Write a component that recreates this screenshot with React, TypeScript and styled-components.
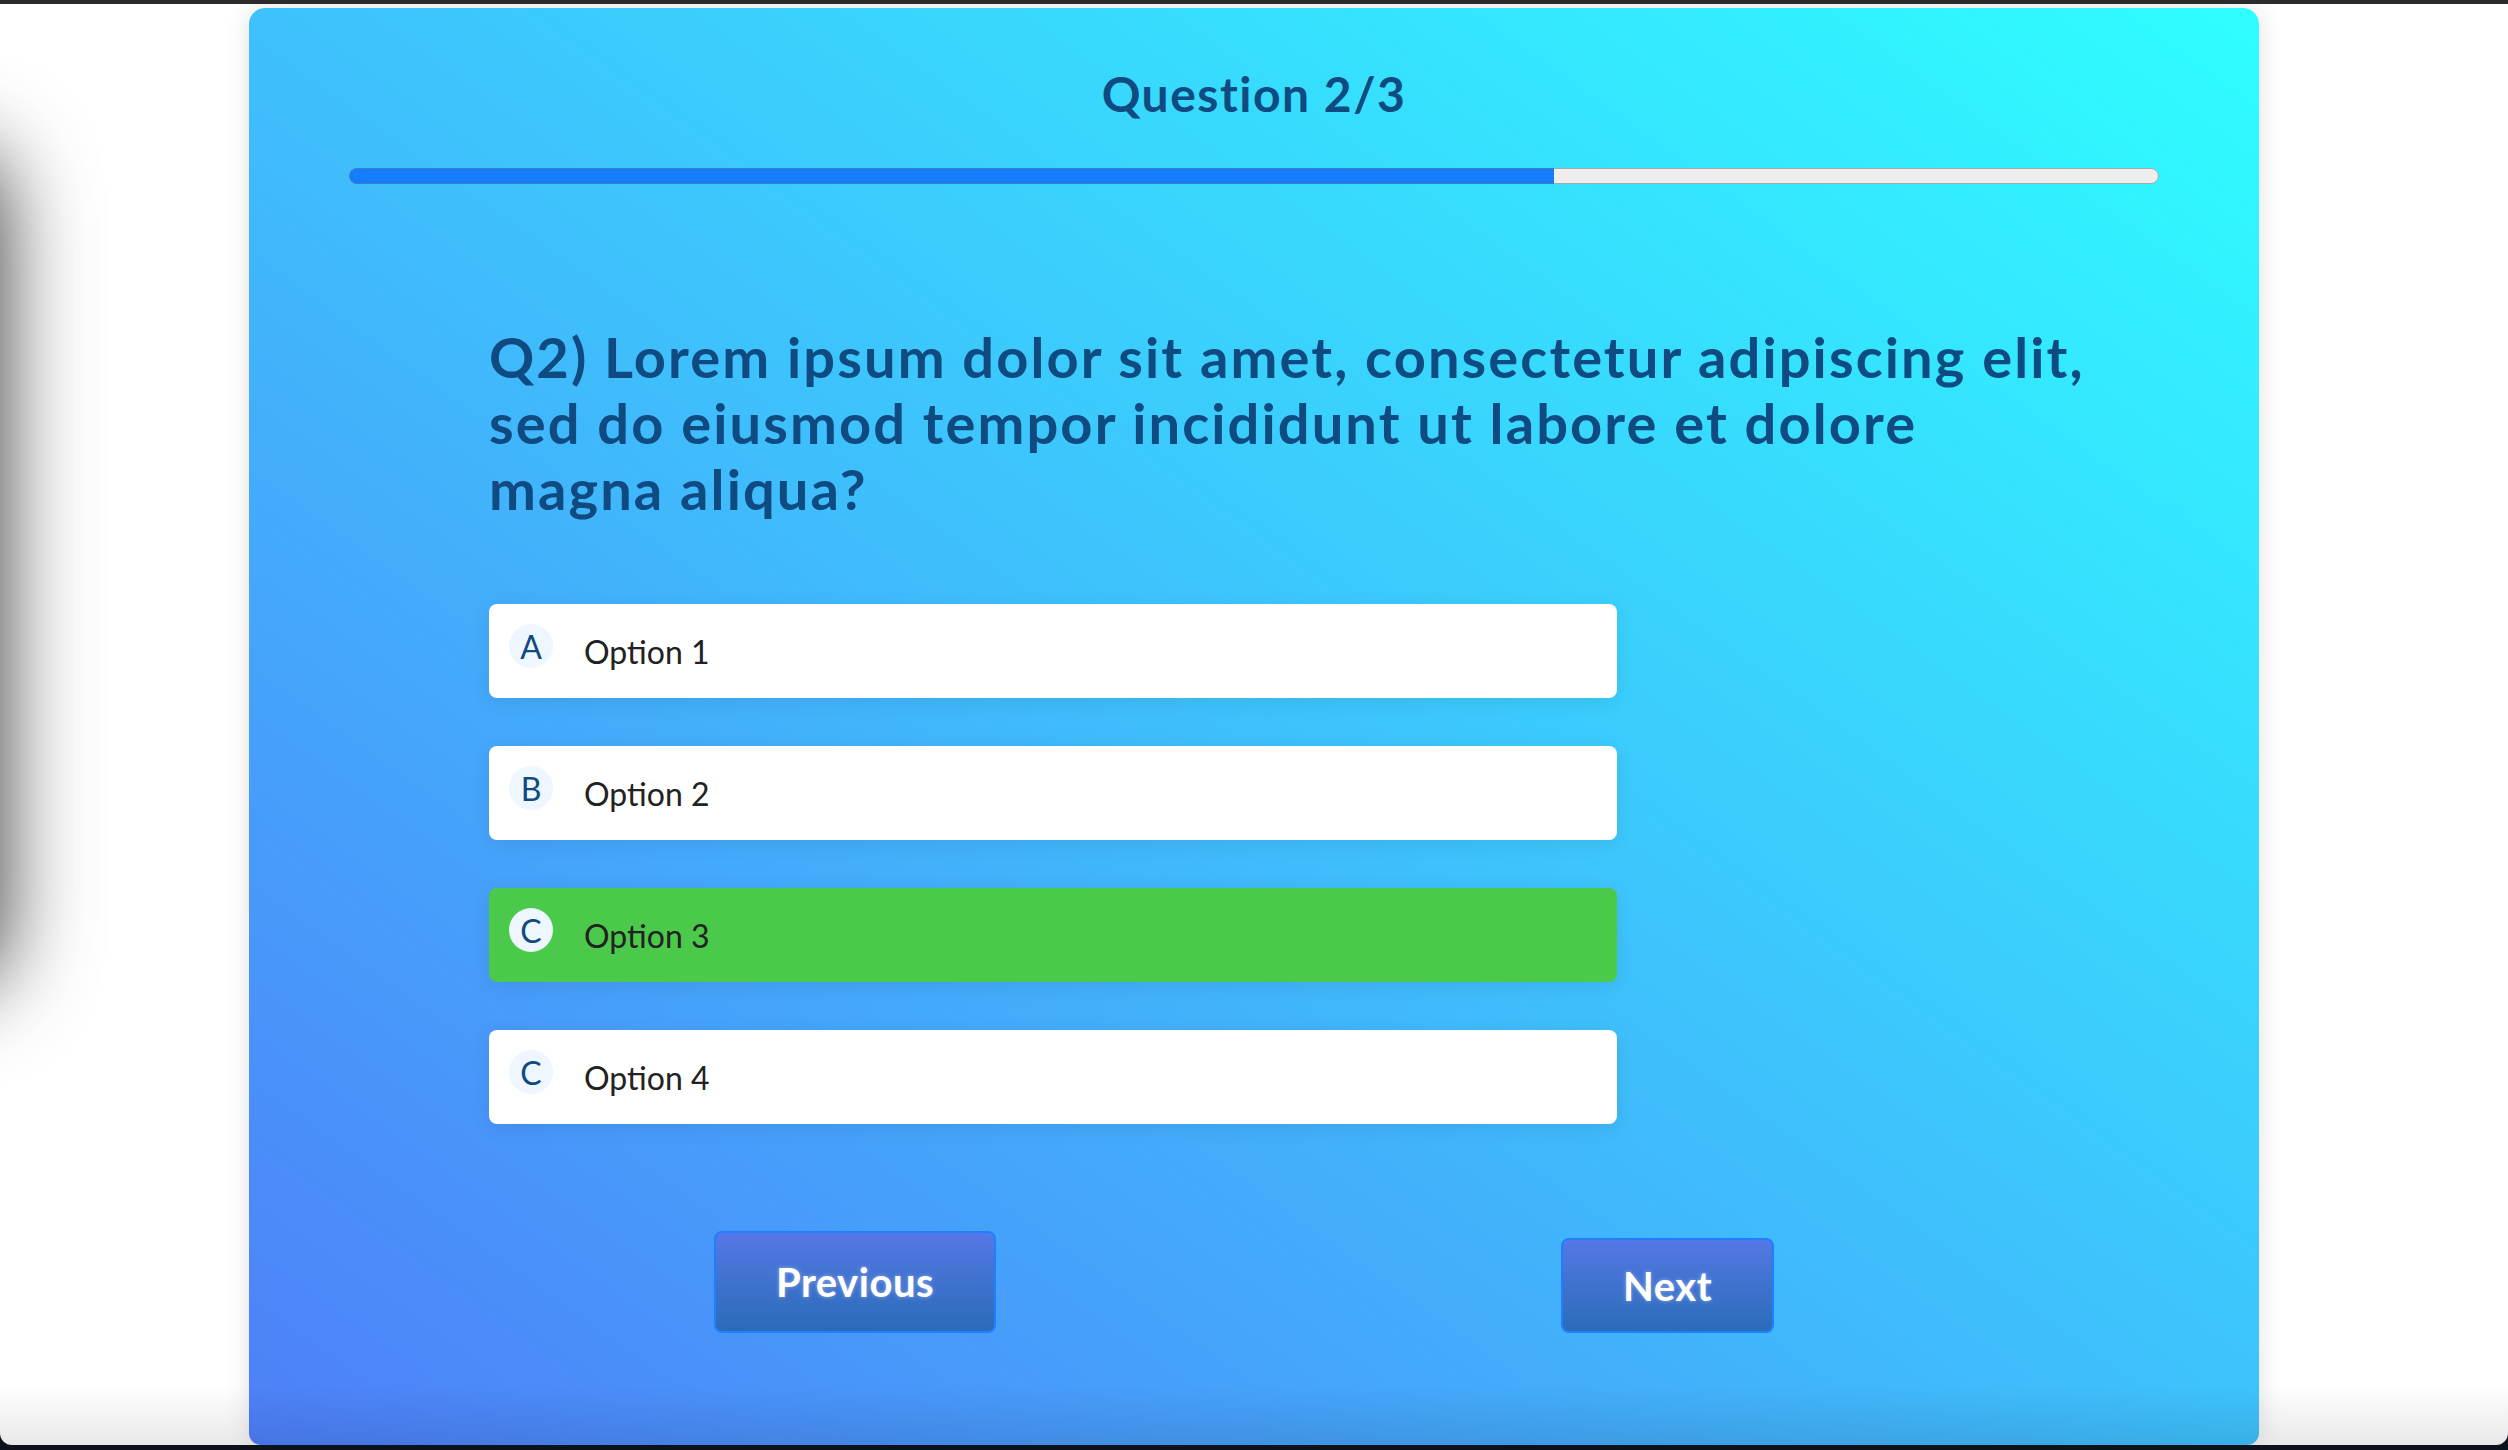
import styled, { createGlobalStyle } from "styled-components";

const options = [
  { letter: "A", label: "Option 1" },
  { letter: "B", label: "Option 2" },
  { letter: "C", label: "Option 3", selected: true },
  { letter: "C", label: "Option 4" },
];

const current = 2;
const total = 3;

const App = () => {
  return (
    <>
      <GlobalStyle />
      <Frame>
        <Window>
          <SideShadow />
          <Card>
            <Title>
              Question {current}/{total}
            </Title>
            <Track>
              <Fill style={{ width: `${(current / total) * 100}%` }} />
            </Track>
            <QuestionText>
              Q2) Lorem ipsum dolor sit amet, consectetur adipiscing elit,
              <br />
              sed do eiusmod tempor incididunt ut labore et dolore
              <br />
              magna aliqua?
            </QuestionText>
            <OptionList>
              {options.map((option) => (
                <OptionRow key={option.label} $selected={option.selected}>
                  <Letter>{option.letter}</Letter>
                  <OptionLabel>{option.label}</OptionLabel>
                </OptionRow>
              ))}
            </OptionList>
            <ButtonRow>
              <NavButton $height={102}>Previous</NavButton>
              <NavButton $height={95}>Next</NavButton>
            </ButtonRow>
          </Card>
          <BottomFade />
        </Window>
      </Frame>
    </>
  );
};

export default App;

const GlobalStyle = createGlobalStyle`
  html, body {
    margin: 0;
    padding: 0;
  }
  body {
    background: #0c121b;
    font-family: Lato, "Open Sans", sans-serif;
  }
`;

const Frame = styled.div`
  width: 2508px;
  height: 1450px;
  box-sizing: border-box;
  border-top: 4px solid #2b2b2b;
  padding-bottom: 5px;
  background: #0c121b;
`;

const Window = styled.div`
  position: relative;
  height: 100%;
  box-sizing: border-box;
  padding-top: 4px;
  display: flex;
  justify-content: center;
  background: #ffffff;
  border-radius: 0 0 12px 12px;
  overflow: hidden;
`;

const SideShadow = styled.div`
  position: absolute;
  left: -140px;
  top: 150px;
  width: 140px;
  height: 830px;
  border-radius: 40px;
  box-shadow: 0 0 90px rgba(0, 0, 0, 0.8);
`;

const BottomFade = styled.div`
  position: absolute;
  left: 0;
  right: 0;
  bottom: 0;
  height: 60px;
  background: linear-gradient(to bottom, rgba(0, 0, 0, 0), rgba(0, 0, 0, 0.09));
  pointer-events: none;
`;

const Card = styled.div`
  width: 2010px;
  box-sizing: border-box;
  padding: 57px 100px 0;
  display: flex;
  flex-direction: column;
  border-radius: 16px 16px 12px 12px;
  background: linear-gradient(to top right, #4e7ff9 0%, #3ec1fc 50%, #2efeff 100%);
  box-shadow: 0 0 24px rgba(0, 0, 0, 0.12);
`;

const Title = styled.h1`
  margin: 0;
  text-align: center;
  font-size: 48px;
  line-height: 58px;
  font-weight: 700;
  letter-spacing: 1.5px;
  color: #0f4a80;
`;

const Track = styled.div`
  display: flex;
  margin-top: 45px;
  height: 16px;
  box-sizing: border-box;
  border: 1px solid #a9a9a9;
  border-radius: 8px;
  background: #eeeeee;
`;

const Fill = styled.div`
  margin: -1px 0 -1px -1px;
  box-sizing: border-box;
  border: 1px solid #3f7bc8;
  border-right: none;
  border-radius: 8px 0 0 8px;
  background: #147dfb;
`;

const QuestionText = styled.h2`
  margin: 140px 0 0 140px;
  font-size: 56px;
  line-height: 66px;
  font-weight: 700;
  letter-spacing: 2.1px;
  white-space: nowrap;
  color: #0f4a80;
`;

const OptionList = styled.div`
  display: flex;
  flex-direction: column;
  gap: 48px;
  margin: 82px 0 0 140px;
  width: 1128px;
`;

const OptionRow = styled.div<{ $selected?: boolean }>`
  display: flex;
  align-items: center;
  gap: 31px;
  height: 94px;
  box-sizing: border-box;
  padding-left: 20px;
  border-radius: 8px;
  background: ${(p) => (p.$selected ? "#4bc94b" : "#ffffff")};
  box-shadow: 0 4px 20px rgba(0, 0, 0, 0.08);
`;

const Letter = styled.div`
  display: flex;
  align-items: center;
  justify-content: center;
  width: 44px;
  height: 44px;
  margin-bottom: 10px;
  border-radius: 50%;
  background: #eef6ff;
  font-size: 32px;
  font-weight: 400;
  color: #0f4a80;
`;

const OptionLabel = styled.div`
  font-size: 32px;
  font-weight: 400;
  color: #222222;
`;

const ButtonRow = styled.div`
  display: flex;
  align-items: flex-end;
  gap: 565px;
  margin-top: 107px;
  padding-left: 365px;
`;

const NavButton = styled.button<{ $height: number }>`
  height: ${(p) => p.$height}px;
  padding: 0 60px;
  border: 2px solid #1e80ff;
  border-radius: 8px;
  background: linear-gradient(to bottom, #5578e6, #2a6cb8);
  font-family: Lato, "Open Sans", sans-serif;
  font-size: 40px;
  font-weight: 700;
  letter-spacing: 0.5px;
  color: #ffffff;
  text-shadow: 0 0 4px rgba(255, 255, 255, 0.4);
  cursor: pointer;
`;
